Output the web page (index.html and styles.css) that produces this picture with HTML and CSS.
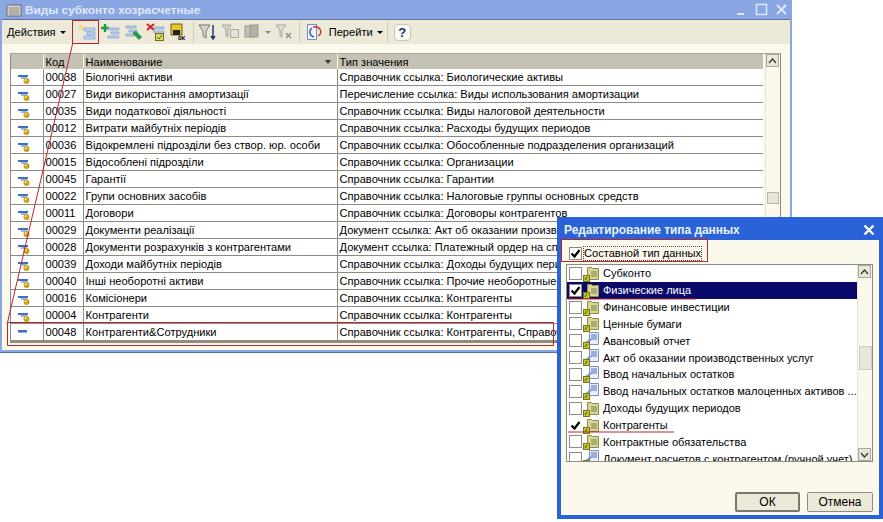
FILE: index.html
```html
<!DOCTYPE html>
<html lang="ru">
<head>
    <meta charset="UTF-8">
    <title>Виды субконто хозрасчетные</title>
    <link rel="stylesheet" href="styles.css">
</head>
<body>
    <svg class="icon-defs" width="0" height="0">
        <defs>
            <symbol id="row-group" viewBox="0 0 16 16">
                <rect x="1" y="6" width="10" height="2" fill="#3d6fc4"/>
                <rect x="4" y="8" width="6" height="2" fill="#9db4e0"/>
                <circle cx="9.5" cy="12" r="3" fill="#c9a020"/>
                <circle cx="8.8" cy="11.2" r="1.1" fill="#f5e08a"/>
            </symbol>
            <symbol id="row-plain" viewBox="0 0 16 16">
                <rect x="1" y="6" width="9" height="2" fill="#3d6fc4"/>
                <rect x="1" y="8" width="9" height="1" fill="#9db4e0"/>
            </symbol>
            <symbol id="folder-ref" viewBox="0 0 16 17">
                <path d="M4.5 2.5h4l1 1h6v11h-11z" fill="#dcd490" stroke="#8f8a4a"/>
                <path d="M8 7h6M8 9h6M8 11h6" stroke="#6f8a5a"/>
                <rect x="0.5" y="10.5" width="6" height="6" fill="#c9c22a" stroke="#6f7a20"/>
                <path d="M2 15l2-3" stroke="#2b5a1c"/>
            </symbol>
            <symbol id="doc-ref" viewBox="0 0 16 17">
                <path d="M6.5 0.5h9v12h-9z" fill="#e8eefa" stroke="#7a90c0"/>
                <path d="M8 3h6M8 5h6M8 7h6" stroke="#4a70b8"/>
                <path d="M3 11l5-4" stroke="#7a90c0" stroke-width="2"/>
                <rect x="0.5" y="10.5" width="6" height="6" fill="#c9c22a" stroke="#6f7a20"/>
                <path d="M2 15l2-3" stroke="#2b5a1c"/>
            </symbol>
            <symbol id="tick" viewBox="0 0 11 11">
                <path d="M1.5 5.5l3 3 5-6.5" fill="none" stroke="#000" stroke-width="2.2"/>
            </symbol>
        </defs>
    </svg>

    <!-- Основное окно -->
    <div class="window main-window">
        <div class="titlebar">
            <svg class="title-icon" width="16" height="14" viewBox="0 0 16 14">
                <rect x="1" y="2" width="14" height="11" fill="#d8d4c4" stroke="#6f6f78"/>
                <path d="M3 5h10M3 7h10M3 9h10M3 11h10" stroke="#8a8a98"/>
            </svg>
            <span class="title-text">Виды субконто хозрасчетные</span>
            <div class="title-controls">
                <svg width="56" height="14" viewBox="0 0 56 14">
                    <path d="M3 11h7" stroke="#dfe8fa" stroke-width="2"/>
                    <rect x="22.5" y="1.5" width="10" height="10" fill="none" stroke="#dfe8fa" stroke-width="1.5"/>
                    <path d="M43 2l9 9M52 2l-9 9" stroke="#dfe8fa" stroke-width="2"/>
                </svg>
            </div>
        </div>
        <div class="toolbar">
            <span class="tb-text tb-actions">Действия <i class="caret"></i></span>
            <span class="tb-sep"></span>
            <svg class="tb-icon" width="20" height="18" viewBox="0 0 20 18">
                <path d="M4 1v7M1 4h7M2 2l4 4M6 2L2 6" stroke="#f3de6a"/>
                <path d="M7 5h11v3H7zM10 9h8v3h-8zM7 13h11v3H7z" fill="#c2d3f0" stroke="#7f9bd0" stroke-width=".7"/>
            </svg>
            <svg class="tb-icon" width="20" height="18" viewBox="0 0 20 18">
                <path d="M5 1v8M1 5h8" stroke="#1f9a3a" stroke-width="2.4"/>
                <path d="M8 5h11v2H8zM11 9h8v2h-8zM8 13h11v2H8z" fill="#c2d3f0" stroke="#7f9bd0" stroke-width=".7"/>
            </svg>
            <svg class="tb-icon" width="20" height="18" viewBox="0 0 20 18">
                <path d="M3 3h10v2H3zM6 7h8v2H6zM3 11h8v2H3z" fill="#c2d3f0" stroke="#7f9bd0" stroke-width=".7"/>
                <path d="M10 9l3-1 6 6-3 3-6-6z" fill="#2f9a4a"/>
            </svg>
            <svg class="tb-icon" width="20" height="18" viewBox="0 0 20 18">
                <path d="M1 1l7 6M8 1L1 7" stroke="#d8201c" stroke-width="2"/>
                <path d="M8 4h10v2H8zM8 8h10v2H8z" fill="#c2d3f0" stroke="#7f9bd0" stroke-width=".7"/>
                <rect x="9.5" y="10.5" width="8" height="7" fill="#e8d85a" stroke="#6f6a20"/>
                <path d="M11 14l2 2 3-4" fill="none" stroke="#2a6a2a"/>
            </svg>
            <svg class="tb-icon" width="20" height="18" viewBox="0 0 20 18">
                <path d="M2 1h11v11H2z" fill="#e8c830" stroke="#6a5a10"/>
                <rect x="4" y="7" width="7" height="5" fill="#222"/>
                <text class="tb-ok" x="9" y="17">ОК</text>
            </svg>
            <span class="tb-sep"></span>
            <svg class="tb-icon" width="20" height="18" viewBox="0 0 20 18">
                <path d="M1 2h11L8 8v7l-3-2V8z" fill="#d8d8d0" stroke="#77776f"/>
                <path d="M15 2v13M13 13l2 3 2-3" fill="none" stroke="#1f2f6a" stroke-width="1.4"/>
            </svg>
            <svg class="tb-icon" width="20" height="18" viewBox="0 0 20 18">
                <path d="M1 2h9L7 7v7l-2-1V7z" fill="#d4d2c6" stroke="#aaa89c"/>
                <rect x="9.5" y="6.5" width="8" height="8" fill="#e4e2d6" stroke="#aaa89c"/>
            </svg>
            <svg class="tb-icon tb-icon-drop" width="18" height="18" viewBox="0 0 18 18">
                <rect x="1" y="3" width="8" height="11" fill="#c4c2b6" stroke="#9a988c"/>
                <rect x="6" y="2" width="8" height="12" fill="#b4b2a6" stroke="#9a988c"/>
            </svg>
            <i class="caret caret-off"></i>
            <svg class="tb-icon" width="20" height="18" viewBox="0 0 20 18">
                <path d="M1 2h10L7 7v7l-2-1V7z" fill="#dedcd0" stroke="#aaa89c"/>
                <path d="M11 10l5 5M16 10l-5 5" stroke="#8a8a82" stroke-width="1.3"/>
            </svg>
            <span class="tb-sep"></span>
            <svg class="tb-icon" width="18" height="18" viewBox="0 0 18 18">
                <rect x="3.5" y="1.5" width="9" height="15" fill="#eef2fa" stroke="#7a90c0"/>
                <path d="M9 4a6 5 0 0 1 5 9" fill="none" stroke="#c8302a" stroke-width="1.4"/>
                <path d="M10 14a5 5 0 0 1-2-9" fill="none" stroke="#3a5aa8" stroke-width="1.4"/>
            </svg>
            <span class="tb-text tb-go">Перейти <i class="caret"></i></span>
            <span class="tb-sep"></span>
            <span class="help-btn">?</span>
        </div>
        <div class="content">
            <div class="grid">
                <table class="grid-table">
                    <colgroup>
                        <col class="col-icon"><col class="col-code"><col class="col-name"><col>
                    </colgroup>
                    <thead>
                        <tr>
                            <th></th>
                            <th>Код</th>
                            <th>Наименование <i class="sort-mark"></i></th>
                            <th>Тип значения</th>
                        </tr>
                    </thead>
                    <tbody>
                        <tr><td><svg class="row-icon"><use href="#row-group"/></svg></td><td>00038</td><td>Біологічні активи</td><td>Справочник ссылка: Биологические активы</td></tr>
                        <tr><td><svg class="row-icon"><use href="#row-group"/></svg></td><td>00027</td><td>Види використання амортизації</td><td>Перечисление ссылка: Виды использования амортизации</td></tr>
                        <tr><td><svg class="row-icon"><use href="#row-group"/></svg></td><td>00035</td><td>Види податкової діяльності</td><td>Справочник ссылка: Виды налоговой деятельности</td></tr>
                        <tr><td><svg class="row-icon"><use href="#row-group"/></svg></td><td>00012</td><td>Витрати майбутніх періодів</td><td>Справочник ссылка: Расходы будущих периодов</td></tr>
                        <tr><td><svg class="row-icon"><use href="#row-group"/></svg></td><td>00036</td><td>Відокремлені підрозділи без створ. юр. особи</td><td>Справочник ссылка: Обособленные подразделения организаций</td></tr>
                        <tr><td><svg class="row-icon"><use href="#row-group"/></svg></td><td>00015</td><td>Відособлені підрозділи</td><td>Справочник ссылка: Организации</td></tr>
                        <tr><td><svg class="row-icon"><use href="#row-group"/></svg></td><td>00045</td><td>Гарантії</td><td>Справочник ссылка: Гарантии</td></tr>
                        <tr><td><svg class="row-icon"><use href="#row-group"/></svg></td><td>00022</td><td>Групи основних засобів</td><td>Справочник ссылка: Налоговые группы основных средств</td></tr>
                        <tr><td><svg class="row-icon"><use href="#row-group"/></svg></td><td>00011</td><td>Договори</td><td>Справочник ссылка: Договоры контрагентов</td></tr>
                        <tr><td><svg class="row-icon"><use href="#row-group"/></svg></td><td>00029</td><td>Документи реалізації</td><td>Документ ссылка: Акт об оказании производственных услуг</td></tr>
                        <tr><td><svg class="row-icon"><use href="#row-group"/></svg></td><td>00028</td><td>Документи розрахунків з контрагентами</td><td>Документ ссылка: Платежный ордер на списание</td></tr>
                        <tr><td><svg class="row-icon"><use href="#row-group"/></svg></td><td>00039</td><td>Доходи майбутніх періодів</td><td>Справочник ссылка: Доходы будущих периодов</td></tr>
                        <tr><td><svg class="row-icon"><use href="#row-group"/></svg></td><td>00040</td><td>Інші необоротні активи</td><td>Справочник ссылка: Прочие необоротные активы</td></tr>
                        <tr><td><svg class="row-icon"><use href="#row-group"/></svg></td><td>00016</td><td>Комісіонери</td><td>Справочник ссылка: Контрагенты</td></tr>
                        <tr><td><svg class="row-icon"><use href="#row-group"/></svg></td><td>00004</td><td>Контрагенти</td><td>Справочник ссылка: Контрагенты</td></tr>
                        <tr><td><svg class="row-icon"><use href="#row-plain"/></svg></td><td>00048</td><td>Контрагенти&amp;Сотрудники</td><td>Справочник ссылка: Контрагенты, Справочник ссылка: Физические лица</td></tr>
                    </tbody>
                </table>
                <div class="scrollbar">
                    <span class="sb-btn">
                        <svg width="9" height="6" viewBox="0 0 9 6"><path d="M1 5l3.5-4L8 5" fill="none" stroke="#333" stroke-width="1.2"/></svg>
                    </span>
                    <span class="sb-thumb"></span>
                </div>
            </div>
        </div>
    </div>

    <!-- Диалог выбора типа -->
    <div class="window dialog">
        <div class="dialog-title">
            <span>Редактирование типа данных</span>
            <svg width="12" height="12" viewBox="0 0 12 12"><path d="M1.5 1.5l9 9M10.5 1.5l-9 9" stroke="#fff" stroke-width="2.4"/></svg>
        </div>
        <div class="dialog-body">
            <label class="composite">
                <span class="check"><svg class="tick"><use href="#tick"/></svg></span>
                <span class="composite-text">Составной тип данных</span>
            </label>
            <div class="type-list">
                <div class="type-rows">
                    <div class="type-row"><span class="check"></span><svg class="type-icon"><use href="#folder-ref"/></svg><span>Субконто</span></div>
                    <div class="type-row selected"><span class="check"><svg class="tick"><use href="#tick"/></svg></span><svg class="type-icon"><use href="#folder-ref"/></svg><span>Физические лица</span></div>
                    <div class="type-row"><span class="check"></span><svg class="type-icon"><use href="#folder-ref"/></svg><span>Финансовые инвестиции</span></div>
                    <div class="type-row"><span class="check"></span><svg class="type-icon"><use href="#folder-ref"/></svg><span>Ценные бумаги</span></div>
                    <div class="type-row"><span class="check"></span><svg class="type-icon"><use href="#doc-ref"/></svg><span>Авансовый отчет</span></div>
                    <div class="type-row"><span class="check"></span><svg class="type-icon"><use href="#doc-ref"/></svg><span>Акт об оказании производственных услуг</span></div>
                    <div class="type-row"><span class="check"></span><svg class="type-icon"><use href="#doc-ref"/></svg><span>Ввод начальных остатков</span></div>
                    <div class="type-row"><span class="check"></span><svg class="type-icon"><use href="#doc-ref"/></svg><span>Ввод начальных остатков малоценных активов ...</span></div>
                    <div class="type-row"><span class="check"></span><svg class="type-icon"><use href="#folder-ref"/></svg><span>Доходы будущих периодов</span></div>
                    <div class="type-row"><span class="check check-flat"><svg class="tick"><use href="#tick"/></svg></span><svg class="type-icon"><use href="#folder-ref"/></svg><span>Контрагенты</span></div>
                    <div class="type-row"><span class="check"></span><svg class="type-icon"><use href="#folder-ref"/></svg><span>Контрактные обязательства</span></div>
                    <div class="type-row"><span class="check"></span><svg class="type-icon"><use href="#doc-ref"/></svg><span>Документ расчетов с контрагентом (ручной учет)</span></div>
                </div>
                <div class="list-scroll">
                    <span class="sb-btn">
                        <svg width="9" height="6" viewBox="0 0 9 6"><path d="M1 5l3.5-4L8 5" fill="none" stroke="#333" stroke-width="1.2"/></svg>
                    </span>
                    <span class="list-thumb"></span>
                    <span class="sb-btn">
                        <svg width="9" height="6" viewBox="0 0 9 6"><path d="M1 1l3.5 4L8 1" fill="none" stroke="#333" stroke-width="1.2"/></svg>
                    </span>
                </div>
            </div>
            <div class="dialog-buttons">
                <button class="btn btn-default">ОК</button>
                <button class="btn">Отмена</button>
            </div>
        </div>
    </div>

    <!-- Красные пометки поверх окон -->
    <svg class="marks" width="883" height="522" viewBox="0 0 883 522">
        <g fill="none" stroke="#b8262c">
            <rect x="72.5" y="20.5" width="26" height="23"/>
            <path d="M72.5 44L7.5 322.5V345.5H553.5V322.5H7.5"/>
            <rect x="561.5" y="239.5" width="146" height="22"/>
            <path d="M568 299H696M568 432H674"/>
        </g>
    </svg>
</body>
</html>
```

FILE: styles.css
```css
/* Общие настройки */
html, body {
    height: 100%;
}

body {
    margin: 0;
    background-color: #ffffff;
    font-family: "Liberation Sans", Arial, sans-serif;
    font-size: 11.1px;
    color: #000;
    overflow: hidden;
    position: relative;
}

.icon-defs {
    position: absolute;
}

/* Окна лежат на свободном холсте */
.window {
    position: absolute;
    box-sizing: border-box;
}

.main-window {
    left: 0;
    top: 0;
    width: 792px;
    height: 353px;
    background-color: #8ba7e3;
    padding: 0 2px 2px 2px;
    border-bottom: 1px solid #4f6fb0;
    display: flex;
    flex-direction: column;
}

/* Заголовок окна */
.titlebar {
    height: 19px;
    display: flex;
    align-items: center;
    gap: 3px;
    padding-left: 4px;
    color: #dfe8fa;
    font-size: 11.8px;
    font-weight: bold;
}

.title-controls {
    margin-left: auto;
    height: 14px;
}

/* Панель инструментов */
.toolbar {
    height: 25px;
    box-sizing: border-box;
    background-color: #ece9d8;
    border-top: 1px solid #5a6f9a;
    display: flex;
    align-items: center;
    padding-left: 5px;
}

.tb-text {
    white-space: nowrap;
}

.tb-actions {
    margin-right: 5px;
}

.tb-go {
    margin-left: 4px;
    margin-right: 3px;
}

.caret {
    display: inline-block;
    width: 0;
    height: 0;
    border-left: 3px solid transparent;
    border-right: 3px solid transparent;
    border-top: 3px solid #000;
    vertical-align: 2px;
    margin-left: 1px;
}

.caret-off {
    border-top-color: #8a8a82;
    margin-right: 4px;
}

.tb-sep {
    width: 1px;
    height: 20px;
    background-color: #cfccba;
    margin: 0 4px 0 1px;
}

.tb-icon {
    margin-right: 3px;
    flex: none;
}

.tb-icon-drop {
    margin-right: 2px;
}

.tb-ok {
    font-size: 6px;
    font-family: "Liberation Mono", monospace;
    font-weight: bold;
}

.help-btn {
    width: 17px;
    height: 17px;
    margin-left: 2px;
    box-sizing: border-box;
    border: 1px solid #c9c6b4;
    border-radius: 4px;
    background-color: #fbfaf4;
    color: #1a2f7a;
    font-weight: bold;
    font-size: 13px;
    line-height: 15px;
    text-align: center;
}

/* Таблица */
.content {
    flex: 1;
    background-color: #fbf8ec;
    padding: 9px 9px 0 8px;
    min-height: 0;
}

.grid {
    display: flex;
    border: 1px solid #8e8c82;
    border-bottom-width: 2px;
    border-top-color: #a8a69a;
    height: 290px;
    box-sizing: border-box;
    overflow: hidden;
}

.grid-table {
    flex: 1;
    min-width: 0;
    align-self: flex-start;
    border-collapse: collapse;
    table-layout: fixed;
    background-color: #ffffff;
}

.col-icon {
    width: 32px;
}

.col-code {
    width: 40px;
}

.col-name {
    width: 254px;
}

.grid-table th {
    height: 15px;
    padding: 0 0 0 2px;
    background-color: #c5c1b4;
    border-right: 1px solid #fbf8ec;
    font-weight: normal;
    text-align: left;
    position: relative;
    white-space: nowrap;
}

.grid-table td {
    height: 16px;
    padding: 0 0 0 2px;
    border-right: 1px solid #8e8c82;
    border-bottom: 1px solid #8e8c82;
    white-space: nowrap;
    overflow: hidden;
}

.grid-table td:last-child,
.grid-table th:last-child {
    border-right: none;
}

.sort-mark {
    position: absolute;
    right: 6px;
    top: 6px;
    width: 0;
    height: 0;
    border-left: 3px solid transparent;
    border-right: 3px solid transparent;
    border-top: 4px solid #333;
}

.row-icon {
    display: block;
    width: 16px;
    height: 16px;
    margin-left: 4px;
}

.scrollbar {
    width: 14px;
    flex: none;
    background-color: #fbf8ec;
    border-left: 1px solid #e8e5d6;
    position: relative;
    margin-left: 2px;
}

.sb-btn {
    display: flex;
    align-items: center;
    justify-content: center;
    width: 13px;
    height: 13px;
    flex: none;
    box-sizing: border-box;
    border: 1px solid #aaa89a;
    background-color: #e9e6d8;
}

.sb-thumb {
    position: absolute;
    left: 1px;
    top: 138px;
    width: 10px;
    height: 10px;
    background-color: #e9e6d8;
    border: 1px solid #b8b6a8;
}

/* Диалог */
.dialog {
    left: 557px;
    top: 217px;
    width: 326px;
    height: 302px;
    background-color: #2a62d8;
    padding: 0 4px 4px 4px;
    display: flex;
    flex-direction: column;
}

.dialog-title {
    height: 23px;
    flex: none;
    box-sizing: border-box;
    display: flex;
    align-items: center;
    justify-content: space-between;
    padding: 3px 4px 0 3px;
    color: #e8f4fa;
    font-size: 11.9px;
    font-weight: bold;
}

.dialog-body {
    flex: 1;
    background-color: #fbf8ec;
    padding: 3px 0 0 2px;
    min-height: 0;
    display: flex;
    flex-direction: column;
}

.composite {
    display: flex;
    align-items: center;
    gap: 1px;
    height: 20px;
    flex: none;
    margin-left: 6px;
}

.composite-text {
    border: 1px dotted #444;
    line-height: 13px;
}

.check {
    width: 13px;
    height: 13px;
    flex: none;
    box-sizing: border-box;
    border: 1px solid #8e8c82;
    background-color: #fff;
    display: flex;
    align-items: center;
    justify-content: center;
}

.check-flat {
    border-color: transparent;
    background-color: transparent;
}

.tick {
    width: 11px;
    height: 11px;
}

.type-list {
    margin: 1px 6px 0 3px;
    height: 198px;
    flex: none;
    box-sizing: border-box;
    border: 1px solid #8e8c82;
    background-color: #fff;
    display: flex;
    overflow: hidden;
}

.type-rows {
    flex: 1;
    min-width: 0;
    overflow: hidden;
    font-size: 11px;
}

.type-row {
    height: 16.85px;
    display: flex;
    align-items: center;
    padding-left: 2px;
    white-space: nowrap;
}

.type-row.selected {
    background-color: #0a0a6a;
    color: #fff;
}

.type-icon {
    width: 16px;
    height: 17px;
    flex: none;
    margin: 0 4px 0 1px;
}

.list-scroll {
    width: 14px;
    flex: none;
    background-color: #fbf8ec;
    display: flex;
    flex-direction: column;
    border-left: 1px solid #e8e5d6;
}

.list-thumb {
    width: 11px;
    height: 22px;
    margin: 68px 0 auto 1px;
    background-color: #e9e6d8;
    border: 1px solid #cfccba;
}

.dialog-buttons {
    margin-top: auto;
    display: flex;
    justify-content: flex-end;
    gap: 7px;
    padding: 0 6px 3px 0;
}

.btn {
    width: 66px;
    height: 20px;
    padding: 0;
    font-family: inherit;
    font-size: 12px;
    color: #000;
    background-color: #ece9d8;
    border: 1px solid #8e8c82;
    border-radius: 2px;
}

.btn-default {
    width: 65px;
    border: 2px solid #7a786e;
}

/* Красные пометки */
.marks {
    position: absolute;
    left: 0;
    top: 0;
    pointer-events: none;
}
```
